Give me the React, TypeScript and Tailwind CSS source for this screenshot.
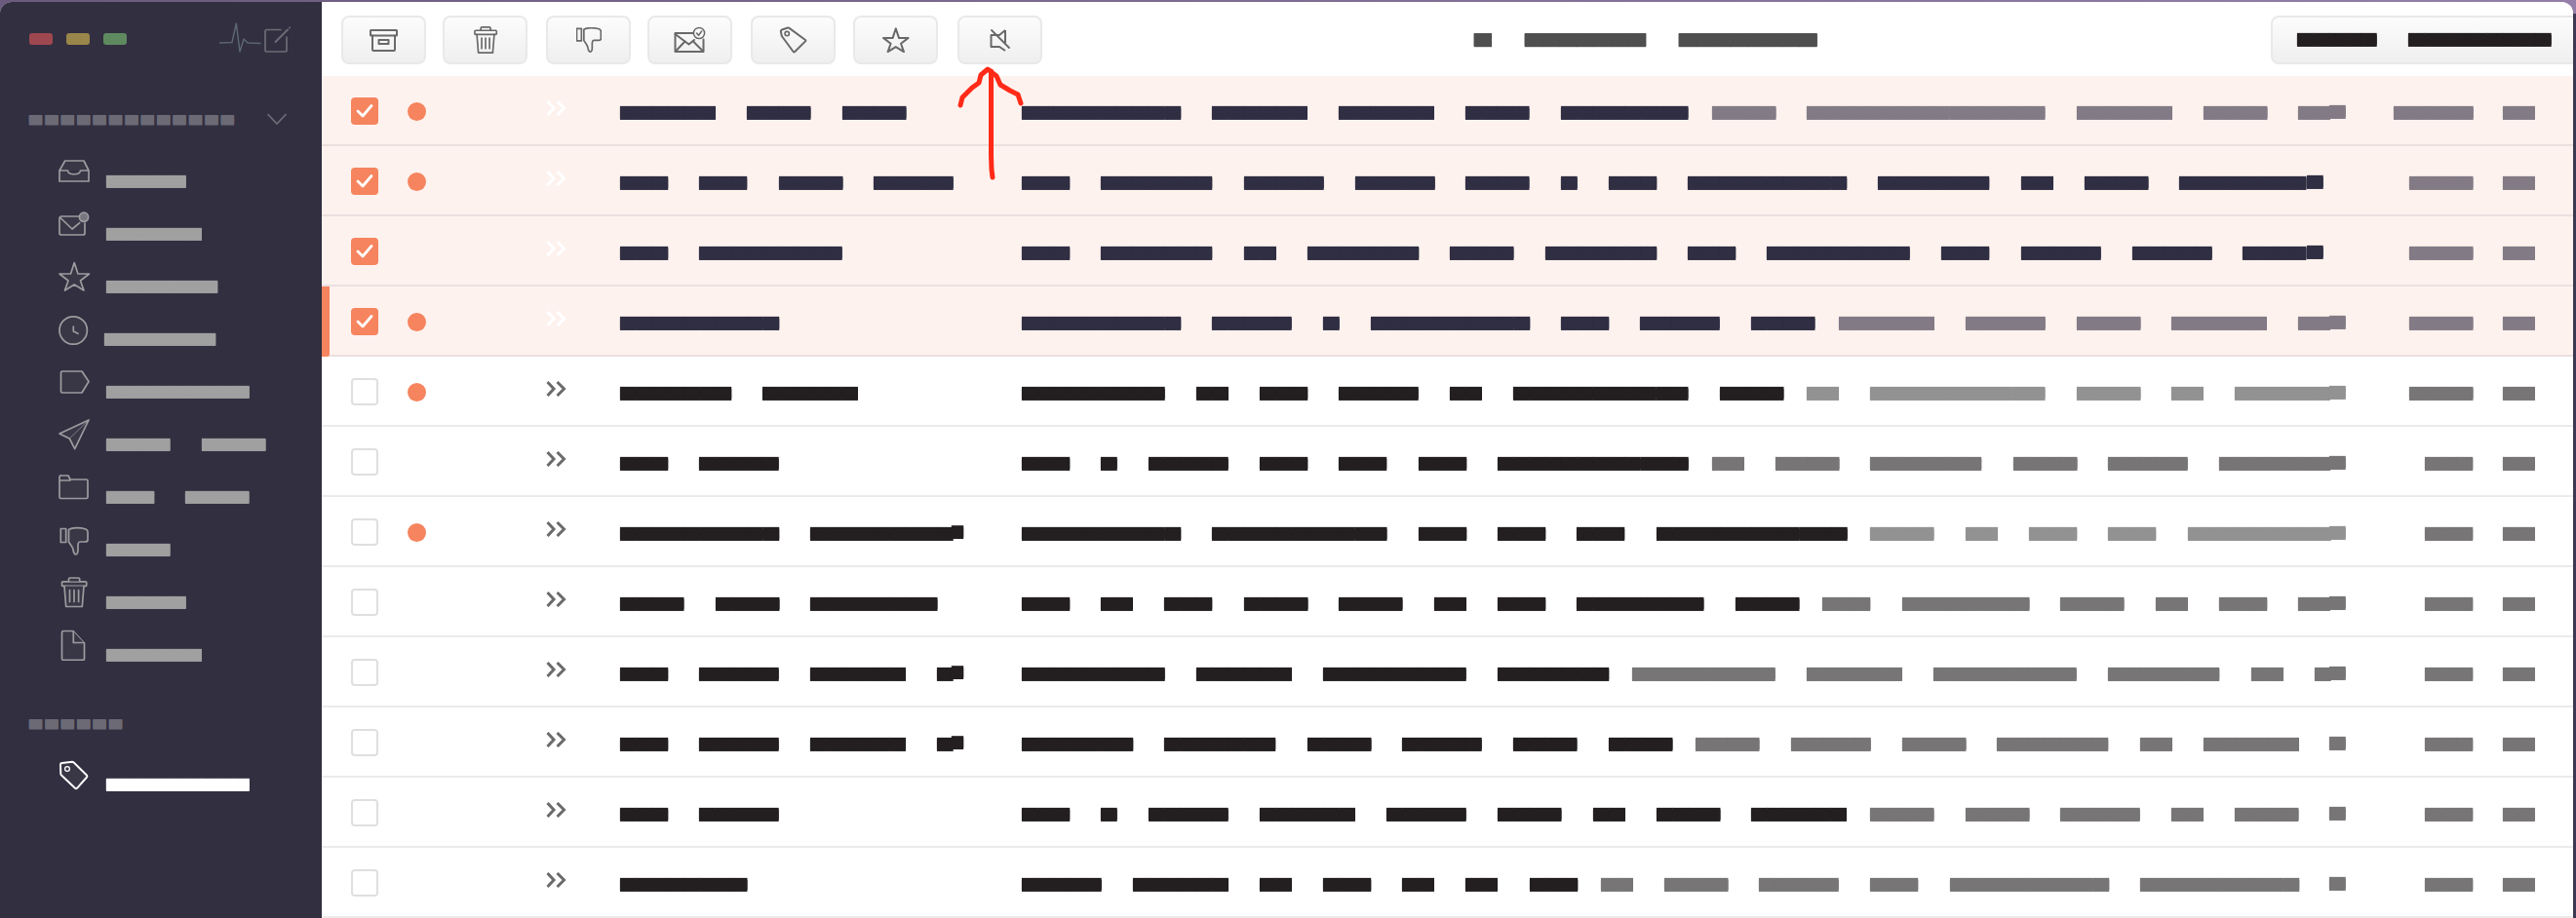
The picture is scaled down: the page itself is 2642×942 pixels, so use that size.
import React from "react";

const GAP = "gap-[32.54px]";

function Bar({ n, c, size = "h-[12px] -translate-y-[9px] leading-[12px] [text-shadow:0_-2px_0_currentColor]" }: { n: number; c: string; size?: string }) {
  return (
    <span className={`block flex-none whitespace-nowrap font-['DejaVu_Sans_Mono',monospace] text-[27.03px] will-change-transform ${size} ${c}`}>
      {"▃".repeat(n)}
    </span>
  );
}

const SIDE_SIZE = "h-[11px] -translate-y-[10px] leading-[11px] [text-shadow:0_-1px_0_currentColor]";

function Words({ list, c }: { list: number[]; c: string }) {
  return (
    <span className={`flex flex-none ${GAP}`}>
      {list.map((n, i) => (
        <Bar key={i} n={n} c={c} />
      ))}
    </span>
  );
}

function Cells({ n }: { n: number }) {
  return (
    <span className="block h-[9px] -translate-y-[8px] whitespace-nowrap font-['DejaVu_Sans_Mono',monospace] text-[21.6px] leading-[9px] tracking-[3.4px] text-[#6b6a75] [text-shadow:0_-1px_0_currentColor]">
      {"▃".repeat(n)}
    </span>
  );
}

/* ---------- shared icon drawings ---------- */
const common = { fill: "none", stroke: "currentColor", strokeLinejoin: "round" as const, strokeLinecap: "round" as const };

const StarShape = () => <polygon points="16.2,23.5 20,35 31.5,35 22.5,42 26,52 16.2,46 6.5,52 10,42 1,35 12.5,35" />;
const ThumbShape = () => (
  <>
    <rect x="2.3" y="26.5" width="5.4" height="14" />
    <path d="M10.5 27.5C14 25.2 22 25.2 28 27Q30 28 30 30V38Q30 40 27 40H22C19.5 40 20 44 20 48C20 50 19.2 53 18 53C16.3 53 15.3 50 15 48C14.2 44 11 41.5 10.5 40Z" />
  </>
);
const TrashShape = () => (
  <>
    <rect x="3.5" y="26.8" width="25.2" height="4.6" rx="1" />
    <path d="M10.5 26.5V24A1.2 1.2 0 0 1 11.7 23H20.5A1.2 1.2 0 0 1 21.7 24V26.5" />
    <path d="M6 31.5L7.7 52.5H24.3L26 31.5" />
    <path d="M11.5 35.5V47.5M16 35.5V47.5M20.6 35.5V47.5" />
  </>
);

const sideIcons: Record<string, React.ReactNode> = {
  inbox: <path d="M1 37L6.7 27H26L31 37V48H1ZM1 37H9.5C10 42 22 42 22.5 37H31" />,
  mail: (
    <>
      <path d="M20.5 30H3A2 2 0 0 0 1 32V47A2 2 0 0 0 3 49H25A2 2 0 0 0 27 47V37" />
      <path d="M2 31.5L14 43L21.7 36.7" />
      <circle cx="26" cy="30.8" r="4.6" fill="#77767f" />
    </>
  ),
  star: <StarShape />,
  clock: (
    <>
      <circle cx="15.2" cy="39" r="14.2" />
      <path d="M15.3 35V40L20 42.3" />
    </>
  ),
  label: <path d="M4 27H24L31 37.5L24 49H4A1.5 1.5 0 0 1 2.5 47.5V28.5A1.5 1.5 0 0 1 4 27Z" />,
  send: (
    <>
      <path d="M31 23L1 37L11.3 42L16.7 52.7Z" />
      <path d="M31 23L11.3 42" strokeWidth="0.7" />
    </>
  ),
  folder: <path d="M3 26H10L12 30H28.5A1.5 1.5 0 0 1 30 31.5V48A1.5 1.5 0 0 1 28.5 49.5H2.5A1.5 1.5 0 0 1 1 48V27.5A1.5 1.5 0 0 1 3 26ZM1 31H12" />,
  thumb: <ThumbShape />,
  trash: <TrashShape />,
  file: (
    <>
      <path d="M5 23.5H15L26.5 36V52A1.3 1.3 0 0 1 25.2 53.3H5A1.5 1.5 0 0 1 3.5 52V25A1.5 1.5 0 0 1 5 23.5Z" />
      <path d="M15.3 24V35.5H26" />
    </>
  ),
};

function SideIcon({ name }: { name: string }) {
  return (
    <svg viewBox="0 0 34 54" className="h-[54px] w-[34px] flex-none fill-[#393746] text-[#9c9c9f]" stroke="currentColor" strokeLinejoin="round" strokeLinecap="round" strokeWidth="1.7">
      {sideIcons[name]}
    </svg>
  );
}

const sideItems: { icon: string; words: number[]; ml: string }[] = [
  { icon: "inbox", words: [5], ml: "ml-[15px]" },
  { icon: "mail", words: [6], ml: "ml-[15px]" },
  { icon: "star", words: [7], ml: "ml-[15px]" },
  { icon: "clock", words: [7], ml: "ml-[13px]" },
  { icon: "label", words: [9], ml: "ml-[15px]" },
  { icon: "send", words: [4, 4], ml: "ml-[15px]" },
  { icon: "folder", words: [3, 4], ml: "ml-[15px]" },
  { icon: "thumb", words: [4], ml: "ml-[15px]" },
  { icon: "trash", words: [5], ml: "ml-[15px]" },
  { icon: "file", words: [6], ml: "ml-[15px]" },
];

function Sidebar() {
  return (
    <aside className="w-[330px] flex-none bg-[#322f41] pt-[21px]">
      <div className="flex h-[34px] items-center pl-[30px]">
        <span className="h-[12px] w-[24px] rounded-[3px] bg-[#9f4750]" />
        <span className="ml-[14px] h-[12px] w-[24px] rounded-[3px] bg-[#99864a]" />
        <span className="ml-[14px] h-[12px] w-[24px] rounded-[3px] bg-[#5f8a60]" />
        <svg viewBox="225 23 75 34" className="ml-[95px] h-[34px] w-[75px]" fill="none" strokeLinejoin="round" strokeLinecap="round">
          <path d="M225 44L238 43.5L242.3 24L246 53L250 40L254 44L267 44.5" stroke="#5b6672" strokeWidth="1.5" />
          <path d="M294 38V51.5A1.5 1.5 0 0 1 292.5 53H273.5A1.5 1.5 0 0 1 272 51.5V32A1.5 1.5 0 0 1 273.5 30.5H288" stroke="#6d6c75" strokeWidth="1.7" />
          <path d="M282.5 43L295 30.5" stroke="#6d6c75" strokeWidth="2" />
          <circle cx="297" cy="28.5" r="1" fill="#6d6c75" />
        </svg>
      </div>

      <div className="mt-[59px] flex h-[12px] items-end pl-[30px]">
        <div className="w-[209px]">
          <Cells n={13} />
        </div>
        <svg viewBox="0 0 20 12" className="ml-[35px] h-[12px] w-[20px]" fill="none" stroke="#6b6a75" strokeWidth="1.8">
          <path d="M0.5 1L10 11L19.5 1" />
        </svg>
      </div>

      <nav className="mt-[10px] flex flex-col">
        {sideItems.map((it) => (
          <div key={it.icon} className="flex h-[54px] items-end pl-[60px]">
            <SideIcon name={it.icon} />
            <span className={`flex gap-[32.54px] ${it.ml}`}>
              {it.words.map((n, i) => (
                <Bar key={i} n={n} c="text-[#a0a0a0]" size={SIDE_SIZE} />
              ))}
            </span>
          </div>
        ))}
      </nav>

      <div className="mt-[61px] pl-[30px]">
        <Cells n={6} />
      </div>

      <div className="mt-[9px] flex h-[54px] items-end pl-[60px]">
        <svg viewBox="0 0 34 54" className="h-[54px] w-[34px] flex-none fill-[#393746] text-white" stroke="currentColor" strokeLinejoin="round" strokeLinecap="round" strokeWidth="1.9">
          <path d="M3.5 26L14 24.7A2 2 0 0 1 15.5 25.3L29 38.5A1.5 1.5 0 0 1 29 40.5L19 51.8A1.5 1.5 0 0 1 17 51.8L3 38.5A2 2 0 0 1 2.3 37L2 27.5A1.5 1.5 0 0 1 3.5 26Z" />
          <circle cx="9" cy="32" r="2.4" strokeWidth="1.3" />
        </svg>
        <span className="ml-[15px]">
          <Bar n={9} c="text-white" size={SIDE_SIZE} />
        </span>
      </div>
    </aside>
  );
}

/* ---------- toolbar ---------- */
const tool = "flex h-[50px] w-[87px] flex-none items-center justify-center rounded-[8px] border-2 border-[#e9e9e9] bg-linear-to-b from-[#fcfcfc] to-[#efefef] text-[#696969]";

function Toolbar() {
  return (
    <header className="flex h-[76px] flex-none items-start pl-[20px] pt-[14px]">
      <div className={tool}>
        <svg viewBox="0 0 29 23" className="h-[23px] w-[29px]" {...common} strokeWidth="2">
          <rect x="1" y="1" width="27" height="5.5" rx="0.5" />
          <path d="M3 6.5V21A1 1 0 0 0 4 22H25A1 1 0 0 0 26 21V6.5" />
          <rect x="9.5" y="11" width="10" height="4" />
        </svg>
      </div>
      <div className={`${tool} ml-[17px]`}>
        <svg viewBox="3 22 26 31.5" className="h-[28px] w-[26px]" {...common} strokeWidth="1.9">
          <TrashShape />
        </svg>
      </div>
      <div className={`${tool} ml-[19px]`}>
        <svg viewBox="2 25 28.5 29" className="h-[26px] w-[26px]" {...common} strokeWidth="1.9">
          <ThumbShape />
        </svg>
      </div>
      <div className={`${tool} ml-[17px]`}>
        <svg viewBox="691 26 33 28" className="h-[28px] w-[33px]" {...common} strokeWidth="2">
          <path d="M711 33H692.5V52H721.5V39.5" />
          <path d="M692.5 34L706.5 44.5L712 40" />
          <path d="M693 51.5L702.5 41.5M721 51.5L711 41.5" />
          <circle cx="717" cy="33" r="5.6" strokeWidth="1.5" />
          <path d="M714.5 33L716.5 35.2L719.7 31" strokeWidth="1.5" />
        </svg>
      </div>
      <div className={`${tool} ml-[19px]`}>
        <svg viewBox="800 28 29 28" className="h-[28px] w-[29px]" {...common} strokeWidth="2">
          <path d="M801.8 33A2 2 0 0 1 803 31.5L809 29.5A1.5 1.5 0 0 1 810.5 29.9L827 42A1 1 0 0 1 827 43.4L816 54.2A1 1 0 0 1 814.6 54L802.8 38Z" />
          <circle cx="808.2" cy="35.6" r="2.2" strokeWidth="1.6" />
        </svg>
      </div>
      <div className={`${tool} ml-[18px]`}>
        <svg viewBox="0 22 33 31" className="h-[26px] w-[28px]" {...common} strokeWidth="2.4">
          <StarShape />
        </svg>
      </div>
      <div className={`${tool} ml-[20px]`}>
        <svg viewBox="1012 29 23 25" className="h-[25px] w-[23px]" {...common} strokeWidth="2">
          <path d="M1029 31V44M1029 52L1023 48H1014.5V36H1023L1029 31" strokeLinecap="butt" />
          <path d="M1015 31L1033 49" strokeWidth="1.8" />
        </svg>
      </div>

      <div className="ml-[443px] mt-[20px] flex gap-[34px]">
        {[1, 7, 8].map((n, i) => (
          <span key={i} className="block h-[12px] -translate-y-[11px] whitespace-nowrap font-['DejaVu_Sans_Mono',monospace] text-[29.4px] leading-[12px] text-[#4f4f4f] will-change-transform [text-shadow:0_-1px_0_currentColor]">
            {"▃".repeat(n)}
          </span>
        ))}
      </div>

      <div className="ml-[466px] flex h-[50px] w-[322px] flex-none items-center rounded-l-[8px] border-2 border-[#e9e9e9] bg-linear-to-b from-[#fcfcfc] to-[#efefef] pl-[25px]">
        <span className={`flex ${GAP}`}>
          <Bar n={5} c="text-[#231f20]" />
          <Bar n={9} c="text-[#231f20]" />
        </span>
      </div>
    </header>
  );
}

/* ---------- list ---------- */
type Row = {
  sel?: boolean;
  dot?: boolean;
  s: number[];
  sEll?: boolean;
  d: number[];
  g?: number[];
  fit?: boolean;
  date: number;
  light?: boolean;
  bar?: boolean;
};

const rows: Row[] = [
  { sel: true, dot: true, s: [6, 4, 4], d: [10, 6, 6, 4, 8], g: [4, 15, 6, 4, 2], date: 5 },
  { sel: true, dot: true, s: [3, 3, 4, 5], d: [3, 7, 5, 5, 4, 1, 3, 10, 7, 2, 4, 8], fit: true, date: 4 },
  { sel: true, s: [3, 9], d: [3, 7, 2, 7, 4, 7, 3, 9, 3, 5, 5, 4], fit: true, date: 4 },
  { sel: true, dot: true, bar: true, s: [10], d: [10, 5, 1, 10, 3, 5, 4], g: [6, 5, 4, 6, 2], date: 4 },
  { dot: true, light: true, s: [7, 6], d: [9, 2, 3, 5, 2, 11, 4], g: [2, 11, 4, 2, 6], date: 4 },
  { s: [3, 5], d: [3, 1, 5, 3, 3, 3, 12], g: [2, 4, 7, 4, 5, 7], date: 3 },
  { dot: true, light: true, s: [10, 9], sEll: true, d: [10, 11, 3, 3, 3, 12], g: [4, 2, 3, 3, 9], date: 3 },
  { s: [4, 4, 8], d: [3, 2, 3, 4, 4, 2, 3, 8, 4], g: [3, 8, 4, 2, 3, 2], date: 3 },
  { s: [3, 5, 6, 1], sEll: true, d: [9, 6, 9, 7], g: [9, 6, 9, 7, 2, 1], date: 3 },
  { s: [3, 5, 6, 1], sEll: true, d: [7, 7, 4, 5, 4, 4], g: [4, 5, 4, 7, 2, 6], date: 3 },
  { s: [3, 5], d: [3, 1, 5, 6, 5, 4, 2, 4, 6], g: [4, 4, 5, 2, 4], date: 3 },
  { s: [8], d: [5, 6, 2, 3, 2, 2, 3], g: [2, 4, 5, 3, 10, 10], date: 3 },
];

function MailRow({ r }: { r: Row }) {
  const dark = r.sel ? "text-[#302e42]" : "text-[#231f20]";
  const date = r.sel ? "text-[#827b86]" : "text-[#777575]";
  const grey = r.sel ? "text-[#827b86]" : r.light ? "text-[#939292]" : "text-[#777575]";
  const ell = r.fit ? dark : grey;
  return (
    <div className={`relative flex h-[72px] flex-none items-start border-b-2 pl-[30px] ${r.sel ? "border-[#ecdfdf] bg-[#fef2ee]" : "border-[#ebebeb] bg-white"}`}>
      {r.bar && <span className="absolute left-0 top-0 h-[72px] w-[8px] rounded-br-[3px] bg-[#f5845f]" />}

      {r.sel ? (
        <span className="mt-[22px] flex h-[28px] w-[28px] flex-none items-center justify-center rounded-[4px] bg-[#f5845f]">
          <svg viewBox="0 0 28 28" className="h-[28px] w-[28px]" fill="none" stroke="#fff" strokeWidth="2.8" strokeLinecap="round" strokeLinejoin="round">
            <path d="M7 14L12 19L21 8.5" />
          </svg>
        </span>
      ) : (
        <span className="mt-[22px] h-[28px] w-[28px] flex-none rounded-[4px] border-2 border-[#dfdfdf] bg-white" />
      )}

      <span className={`ml-[30px] mt-[27px] h-[19px] w-[19px] flex-none rounded-full ${r.dot ? "bg-[#f5845f]" : ""}`} />

      <svg viewBox="0 0 21 16" className={`ml-[123px] mt-[25px] h-[16px] w-[21px] flex-none ${r.sel ? "text-[#ffffff]" : "text-[#6b6b6b]"}`} fill="none" stroke="currentColor" strokeWidth="3">
        <path d="M1.5 1L8 8L1.5 15M11.5 1L18.5 8L11.5 15" />
      </svg>

      <div className="ml-[55px] mt-[32px] flex w-[412px] flex-none">
        <Words list={r.s} c={dark} />
        {r.sEll && (
          <span className={`ml-[-1.5px] block h-[12px] w-[12px] flex-none -translate-y-[6px] font-['DejaVu_Sans_Mono',monospace] text-[19.93px] leading-[12px] will-change-transform [text-shadow:0_-2px_0_currentColor] ${dark}`}>
            ▄
          </span>
        )}
      </div>

      <div className="mt-[32px] flex w-[1375px] flex-none">
        <div className={`flex flex-none ${r.fit ? "max-w-[1341px]" : "w-[1341px]"}`}>
          <Words list={r.d} c={dark} />
          {r.g && (
            <span className="ml-[24.4px] flex-none">
              <Words list={r.g} c={grey} />
            </span>
          )}
        </div>
        <span className="flex-none -translate-y-px">
          <Bar n={1} c={ell} />
        </span>
      </div>

      <div className="mt-[32px] flex w-[113px] flex-none justify-end">
        <Bar n={r.date} c={date} />
      </div>
      <div className="ml-[31px] mt-[32px] flex-none">
        <Bar n={2} c={date} />
      </div>
    </div>
  );
}

export default function App() {
  return (
    <div className="relative flex h-[942px] w-[2642px] flex-col overflow-hidden bg-linear-to-r from-[#6a5b7e] to-[#957fa8]">
      <div className="mt-[2px] flex h-[940px] w-[2639px] overflow-hidden rounded-t-[12px] bg-white">
        <Sidebar />
        <main className="flex min-w-0 flex-1 flex-col overflow-hidden bg-white">
          <Toolbar />
          {rows.map((r, i) => (
            <MailRow key={i} r={r} />
          ))}
        </main>
      </div>
      <span className="absolute bottom-0 right-0 top-[14px] w-[3px] bg-[#3c3a52]" />

      <svg className="absolute left-0 top-0 h-[942px] w-[2642px]" viewBox="0 0 2642 942" fill="none" stroke="#ff2a17" strokeWidth="5" strokeLinecap="round" strokeLinejoin="round">
        <path d="M1016.5 73V160L1017 174L1018 182" />
        <path d="M985 108L987 100L997 90L1004 85L1006 77L1013 71L1022 78L1026 87L1036 93L1044 97L1047 106" />
      </svg>
    </div>
  );
}
